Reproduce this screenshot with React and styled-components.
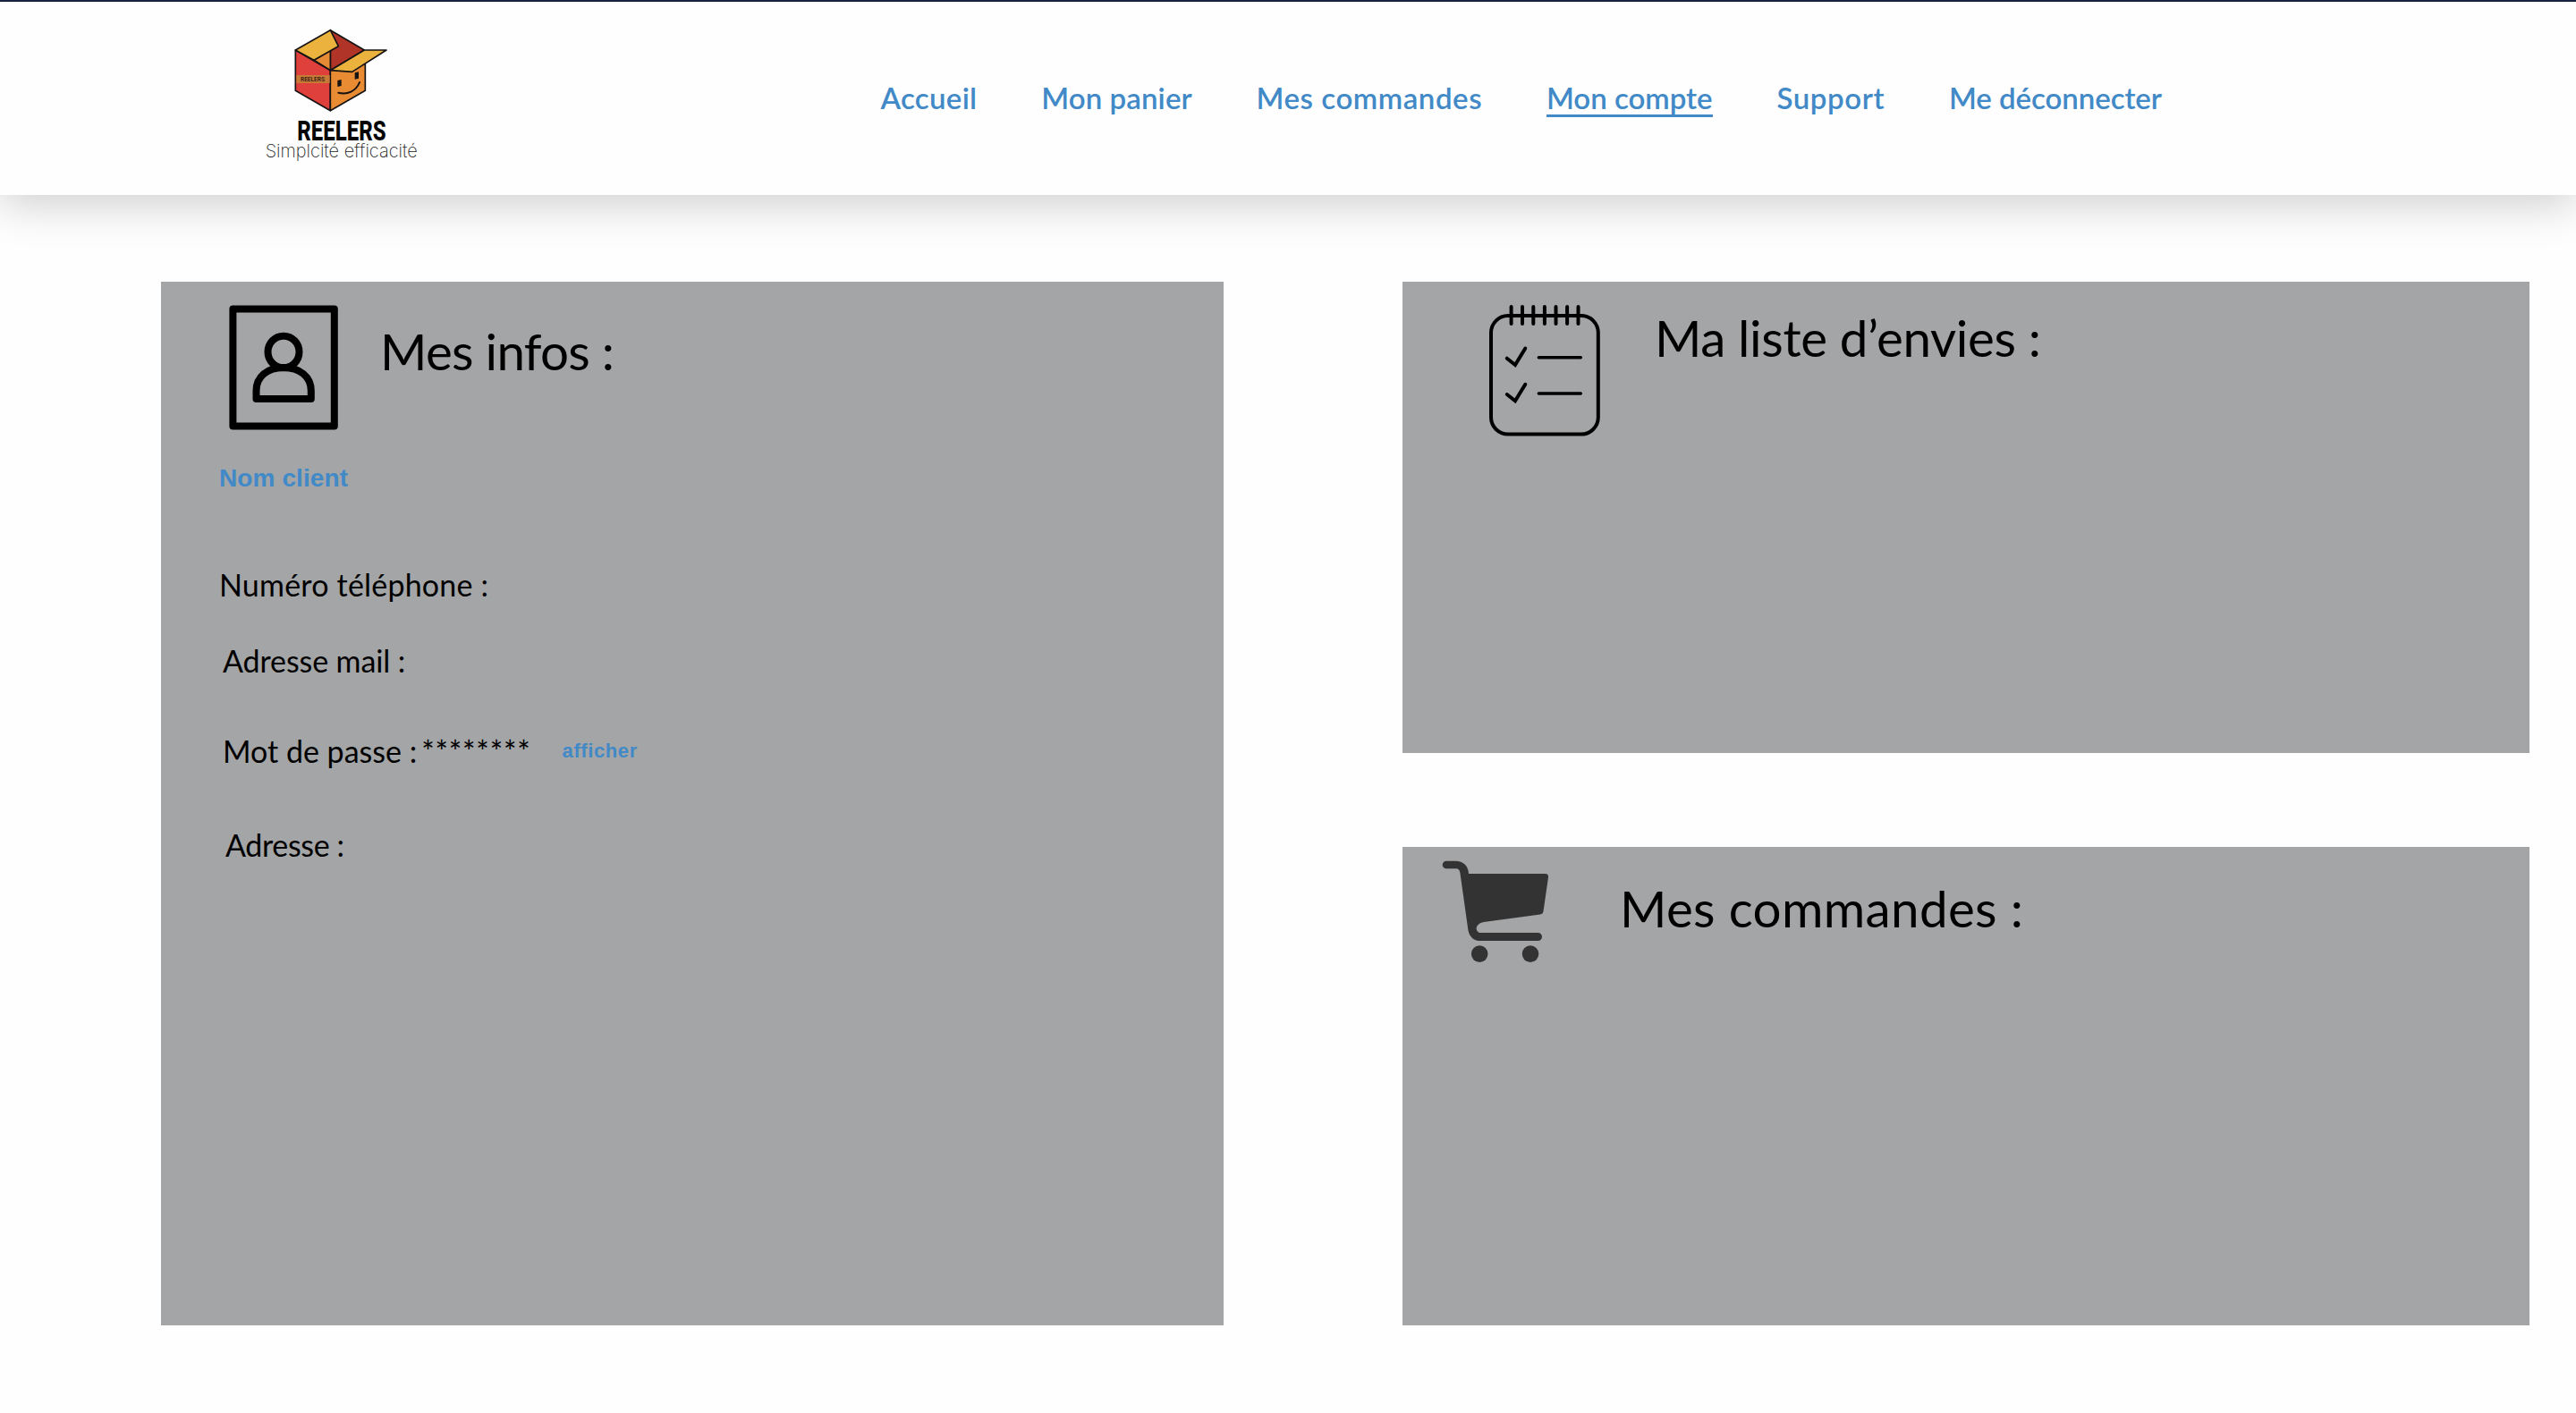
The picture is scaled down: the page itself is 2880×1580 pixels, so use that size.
import React from "react";
import styled, { createGlobalStyle } from "styled-components";

const GlobalStyle = createGlobalStyle`
  * { box-sizing: border-box; }
  body {
    margin: 0;
    background: #fefefe;
    color: #000;
    font-family: Lato, "Open Sans", sans-serif;
  }
  h2, p { margin: 0; font-weight: 400; }
`;

const Page = styled.div`
  min-height: 1580px;
  overflow: hidden;
`;

const Header = styled.header`
  display: flex;
  align-items: flex-start;
  height: 218px;
  padding-left: 280px;
  border-top: 2px solid #17223f;
  background: #fefefe;
  box-shadow: 0 12px 44px rgba(0, 0, 0, 0.18);
`;

const LogoSvg = styled.svg`
  flex: none;
  width: 200px;
  height: 170px;
  margin-top: 18px;
`;

const Nav = styled.nav`
  display: flex;
  gap: 71.8px;
  margin: 88px 0 0 504.5px;
`;

const NavLink = styled.a`
  height: 41px;
  border-bottom: 3px solid ${(p) => (p.$active ? "#4189c7" : "transparent")};
  color: #4189c7;
  font-size: 33px;
  font-weight: 600;
  line-height: 38px;
  letter-spacing: ${(p) => p.$tracking || 0}px;
  white-space: nowrap;
`;

const Main = styled.main`
  display: flex;
  gap: 200px;
  padding: 97px 52px 0 180px;
`;

const Column = styled.div`
  display: flex;
  flex-direction: column;
  gap: 105px;
  width: ${(p) => p.$width}px;
`;

const Panel = styled.section`
  height: ${(p) => p.$height}px;
  padding: ${(p) => p.$pad};
  background: #a4a5a7;
`;

const PanelHead = styled.div`
  display: flex;
  align-items: flex-start;
  gap: ${(p) => p.$gap}px;
`;

const Icon = styled.svg`
  flex: none;
  display: block;
  width: ${(p) => p.$w}px;
  height: ${(p) => p.$h}px;
`;

const Title = styled.h2`
  margin-top: ${(p) => p.$drop}px;
  font-size: 56.5px;
  line-height: 60px;
  letter-spacing: ${(p) => p.$tracking}px;
  white-space: nowrap;
`;

const Client = styled.p`
  margin: 38px 0 0 -11px;
  color: #4189c7;
  font: 700 28px/32px "Liberation Sans", Arial, sans-serif;
  letter-spacing: 0.1px;
`;

const Field = styled.div`
  display: flex;
  align-items: flex-start;
  height: 40px;
  margin: ${(p) => p.$space}px 0 0 ${(p) => p.$shift}px;
  font-size: 34px;
  line-height: 40px;
  letter-spacing: ${(p) => p.$tracking || 0}px;
  white-space: nowrap;
`;

const Mask = styled.span`
  margin-left: 5px;
  letter-spacing: 0.85px;
`;

const Reveal = styled.a`
  margin: 8px 0 0 35px;
  color: #4189c7;
  font: 700 22px/24px "Liberation Sans", Arial, sans-serif;
  letter-spacing: 0.6px;
`;

function Logo() {
  return (
    <LogoSvg viewBox="0 0 600 510">
      <g stroke="#151313" strokeWidth="5" strokeLinejoin="round">
        <path d="M268 41 382 108 268 176Z" fill="#b03428" />
        <path d="M213 142 268 108 268 176Z" fill="#e58a35" />
        <path d="M151 108 268 176 268 311 151 244Z" fill="#df403c" />
        <path d="M268 176 385 155 385 244 268 311Z" fill="#e88b33" />
        <path d="M268 41 151 108 213 142 295 95Z" fill="#ebb33e" />
        <path d="M382 108 456 108 341 181 268 176Z" fill="#ebb33e" />
      </g>
      <path d="M154 192H266V219H154Z" fill="#c77a35" />
      <text x="168" y="214" fontFamily="Roboto, sans-serif" fontSize="23" fontWeight="600" fill="#38201a" textLength="81" lengthAdjust="spacingAndGlyphs">REELERS</text>
      <path d="M292 210 305 207V228L292 231ZM350 184 363 181V203L350 206Z" fill="#151313" />
      <path d="M295 251C325 259 354 246 366 216" fill="none" stroke="#151313" strokeWidth="6" strokeLinecap="round" />
      <text x="157" y="411" fontFamily="Roboto, sans-serif" fontSize="95" fontWeight="800" fill="#050505" textLength="298" lengthAdjust="spacingAndGlyphs">REELERS</text>
      <text x="50" y="468" fontFamily="Inter, sans-serif" fontSize="61" fontWeight="200" fill="#222" textLength="510" lengthAdjust="spacingAndGlyphs">Simplcité efficacité</text>
    </LogoSvg>
  );
}

function ProfileIcon() {
  return (
    <Icon viewBox="256 341 122 140" $w={122} $h={140}>
      <g fill="none" stroke="#000" strokeWidth="8" strokeLinejoin="round">
        <rect x="260.4" y="345.4" width="113.4" height="131.2" />
        <ellipse cx="317" cy="393.5" rx="17.5" ry="17.8" />
        <path d="M286.5 446V437C286.5 421 299 411 317 411S347.8 421 347.8 437V446Z" />
      </g>
    </Icon>
  );
}

const RINGS = [1689.6, 1702, 1714.3, 1726.9, 1739.5, 1752.1, 1764.5];

function ListIcon() {
  return (
    <Icon viewBox="1664 340 126 149" $w={126} $h={149}>
      <g fill="none" stroke="#000" strokeWidth="4" strokeLinecap="round">
        <rect x="1667" y="353" width="119.8" height="132.6" rx="19" />
        {RINGS.map((x) => (
          <path key={x} d={`M${x} 343V362`} />
        ))}
        {[0, 40.3].map((y) => (
          <g key={y} transform={`translate(0 ${y})`}>
            <path d="M1684.8 400.7 1694 408 1705.3 389.5" />
            <path d="M1720.3 399.7H1767.3" strokeWidth="3.4" />
          </g>
        ))}
      </g>
    </Icon>
  );
}

function CartIcon() {
  return (
    <Icon viewBox="1612 962 120 115" $w={120} $h={115}>
      <g fill="#333">
        <path d="M1617 962.7H1627C1636 962.7 1641.5 968 1642 977H1727.5Q1731.3 977 1731 981L1725.5 1019Q1725 1022 1722 1022.5L1659 1031C1649.5 1032.5 1648.5 1041 1654 1043H1719.5A4.5 4.5 0 0 1 1719.5 1052H1653C1646 1051.5 1641.5 1045 1641 1037L1632.4 976C1632 973 1630.5 971.3 1628 971.3H1617A4.3 4.3 0 0 1 1617 962.7Z" />
        <circle cx="1654.2" cy="1066.6" r="9.3" />
        <circle cx="1711" cy="1066.6" r="9.3" />
      </g>
    </Icon>
  );
}

const LINKS = [
  { label: "Accueil", tracking: 0.3 },
  { label: "Mon panier", tracking: 0.1 },
  { label: "Mes commandes", tracking: 0.55 },
  { label: "Mon compte", active: true },
  { label: "Support", tracking: 0.6 },
  { label: "Me déconnecter", tracking: -0.05 },
];

export default function App() {
  return (
    <Page>
      <GlobalStyle />
      <Header>
        <Logo />
        <Nav>
          {LINKS.map((l) => (
            <NavLink key={l.label} $active={l.active} $tracking={l.tracking}>
              {l.label}
            </NavLink>
          ))}
        </Nav>
      </Header>
      <Main>
        <Column $width={1188}>
          <Panel $height={1167} $pad="26px 0 0 76px">
            <PanelHead $gap={47}>
              <ProfileIcon />
              <Title $drop={21} $tracking={-0.7}>Mes infos :</Title>
            </PanelHead>
            <Client>Nom client</Client>
            <Field $space={83} $shift={-11} $tracking={0.2}>Numéro téléphone :</Field>
            <Field $space={45} $shift={-7} $tracking={-0.1}>Adresse mail :</Field>
            <Field $space={61} $shift={-7}>
              <span>Mot de passe :</span>
              <Mask>********</Mask>
              <Reveal>afficher</Reveal>
            </Field>
            <Field $space={65} $shift={-4} $tracking={-0.35}>Adresse :</Field>
          </Panel>
        </Column>
        <Column $width={1260}>
          <Panel $height={527} $pad="25px 0 0 96px">
            <PanelHead $gap={60}>
              <ListIcon />
              <Title $drop={7} $tracking={-0.35}>Ma liste d’envies :</Title>
            </PanelHead>
          </Panel>
          <Panel $height={535} $pad="15px 0 0 44px">
            <PanelHead $gap={79}>
              <CartIcon />
              <Title $drop={23} $tracking={0.35}>Mes commandes :</Title>
            </PanelHead>
          </Panel>
        </Column>
      </Main>
    </Page>
  );
}
